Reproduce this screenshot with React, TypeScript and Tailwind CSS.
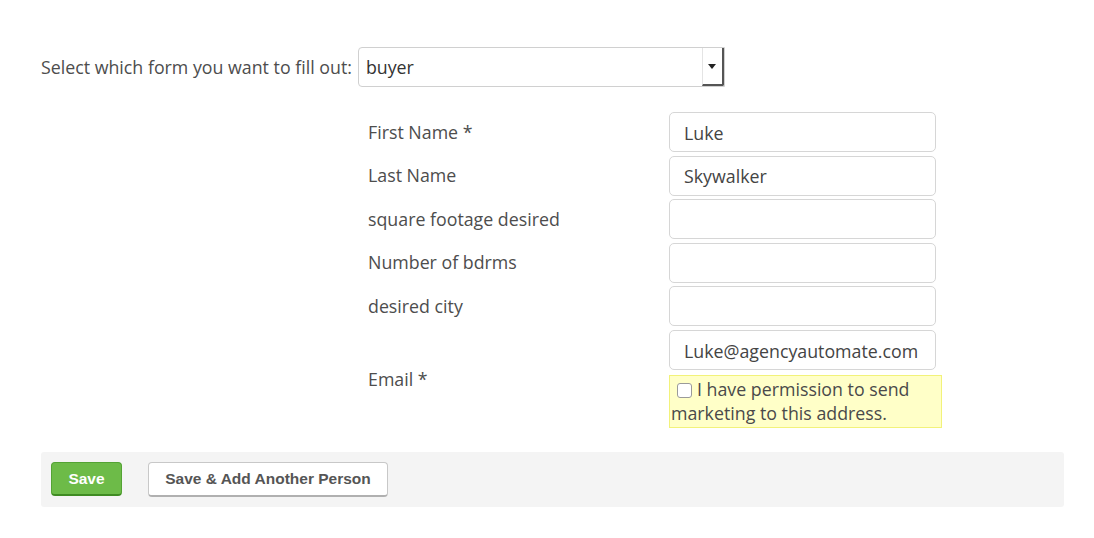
import React from 'react';

const fields = [
  { label: 'First Name *', value: 'Luke' },
  { label: 'Last Name', value: 'Skywalker' },
  { label: 'square footage desired', value: '' },
  { label: 'Number of bdrms', value: '' },
  { label: 'desired city', value: '' },
];

function TextInput({ value }: { value: string }) {
  return (
    <div className="h-[40px] w-[267px] rounded-[5px] border border-[#d6d6d6] bg-white px-[14px] pt-[2px] flex items-center text-[17.8px] text-[#444]">
      {value}
    </div>
  );
}

export default function App() {
  return (
    <div
      className="w-[1094px] h-[538px] bg-white text-[#4a4a4a] flex flex-col"
      style={{ fontFamily: '"Open Sans", Lato, sans-serif' }}
    >
      {/* form picker */}
      <div className="flex items-center pl-[41px] pt-[47px]">
        <span className="text-[17.8px] text-[#4d4d4d]">Select which form you want to fill out:</span>
        <div className="ml-[6px] h-[40px] w-[367px] flex rounded-l-[4px] border border-[#d0d0d0] bg-white">
          <div className="flex-1 flex items-center pl-[7px] text-[17.8px] text-[#333]">buyer</div>
          <div className="w-[22px] flex items-center justify-center border-l border-[#e4e4e4] border-r-2 border-b-2 border-r-[#555] border-b-[#555] rounded-br-[2px]">
            <svg width="8" height="5" viewBox="0 0 8 5">
              <path d="M0 0 L8 0 L4 5 Z" fill="#222" />
            </svg>
          </div>
        </div>
      </div>

      {/* fields */}
      <div className="ml-[368px] mt-[25px] flex flex-col gap-[3.6px]">
        {fields.map((f) => (
          <div key={f.label} className="flex items-center">
            <div className="w-[301px] text-[17.8px] text-[#4d4d4d]">{f.label}</div>
            <TextInput value={f.value} />
          </div>
        ))}
        <div className="flex items-center">
          <div className="w-[301px] text-[17.8px] text-[#4d4d4d]">Email *</div>
          <div className="flex flex-col">
            <TextInput value="Luke@agencyautomate.com" />
            <div className="mt-[5px] w-[273px] bg-[#ffffc8] border border-[#f2f27a] pl-[1px] pt-[1px] pb-[2px] text-[17.8px] leading-[24px] text-[#4a4a4a]">
              <span className="inline-block align-[-2px] ml-[6px] mr-[5px] h-[15px] w-[15px] rounded-[3px] border border-[#9a9a9a] bg-white" />
              I have permission to send marketing to this address.
            </div>
          </div>
        </div>
      </div>

      {/* actions */}
      <div className="ml-[41px] mt-[24px] w-[1023px] h-[55px] bg-[#f4f4f4] rounded-[3px] flex items-center pl-[10px] gap-[26px]">
        <button
          className="h-[34px] w-[71px] rounded-[4px] bg-[#6dbb48] border border-[#54a334] border-b-2 border-b-[#3f8b22] text-white text-[15.5px] font-bold"
          style={{ fontFamily: '"Liberation Sans", Arial, sans-serif' }}
        >
          Save
        </button>
        <button
          className="h-[35px] w-[240px] rounded-[4px] bg-white border border-[#c8c8c8] border-b-2 border-b-[#b0b0b0] text-[#555] text-[15.5px] font-bold"
          style={{ fontFamily: '"Liberation Sans", Arial, sans-serif' }}
        >
          Save &amp; Add Another Person
        </button>
      </div>
    </div>
  );
}
